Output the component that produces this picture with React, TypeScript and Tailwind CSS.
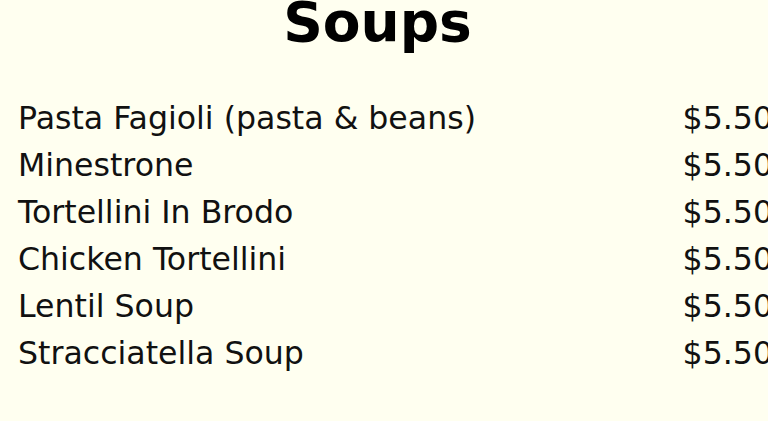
const items = [
  "Pasta Fagioli (pasta & beans)",
  "Minestrone",
  "Tortellini In Brodo",
  "Chicken Tortellini",
  "Lentil Soup",
  "Stracciatella Soup",
];

export default function App() {
  return (
    <div
      className="w-[768px] h-[421px] overflow-hidden bg-[#fffff0] text-[#111]"
      style={{ fontFamily: '"DejaVu Sans", sans-serif' }}
    >
      <h1 className="-mt-[10px] pr-[13px] text-center text-[55px] font-bold leading-[64px] text-black">
        Soups
      </h1>
      <div className="mt-[41px] mr-[-5px] flex flex-col pl-[18px]">
        {items.map((name) => (
          <div key={name} className="flex justify-between text-[31.6px] leading-[47px]">
            <span>{name}</span>
            <span>$5.50</span>
          </div>
        ))}
      </div>
    </div>
  );
}
